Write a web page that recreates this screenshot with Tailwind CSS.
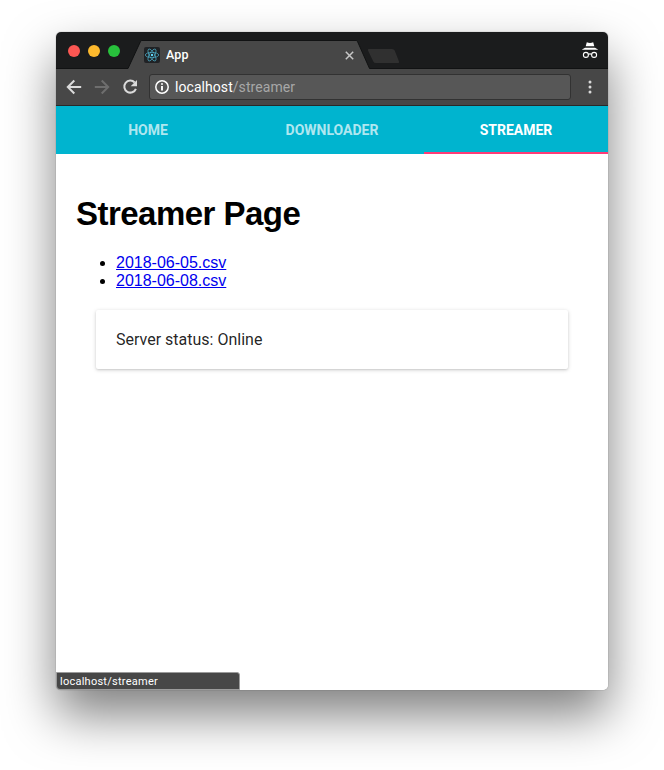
<!DOCTYPE html>
<html lang="en">
<head>
<meta charset="utf-8">
<title>App</title>
<script src="https://cdn.jsdelivr.net/npm/@tailwindcss/browser@4"></script>
</head>
<body class="h-[770px] overflow-hidden bg-white px-14 pt-8">
<div class="relative flex h-[658px] w-[552px] flex-col rounded-[5px] shadow-[0_25px_50px_rgba(0,0,0,0.5),0_0_1px_rgba(0,0,0,0.6)]">
  <div class="flex h-full flex-col overflow-hidden rounded-[5px] bg-white">
    <header class="relative h-[37px] shrink-0 bg-[#1b1c1d]">
      <svg class="absolute inset-0" width="552" height="37" viewBox="0 0 552 37">
        <path d="M0 36.5H72L84.500 9.500Q85 8.500 86 8.500H300Q301 8.500 301.500 9.500L313.500 36.500H552V37H0Z" fill="#474747"/>
        <path d="M0 36.500H72L84.500 9.500Q85 8.500 86 8.500H300Q301 8.500 301.500 9.500L313.500 36.500H552" fill="none" stroke="#111213"/>
        <path d="M312.500 17H336Q338 17 338.700 18.500L343 29.500Q343.500 31 342 31H320Q318 31 317.300 29.500L312 18.500Q311.500 17 312.500 17Z" fill="#303030"/>
      </svg>
      <div class="relative flex h-full items-center">
        <div class="flex gap-2 pl-3">
          <span class="size-3 rounded-full bg-[#fc5753]"></span>
          <span class="size-3 rounded-full bg-[#fdb92d]"></span>
          <span class="size-3 rounded-full bg-[#28c13c]"></span>
        </div>
        <div class="ml-6 flex h-full w-[210px] items-center pt-[9px]">
          <svg class="size-4 rounded-[2px] bg-[#202225]" viewBox="0 0 16 16" fill="none" stroke="#4fb0cc" stroke-width=".7">
            <ellipse cx="8" cy="8" rx="6.700" ry="2.600"/>
            <ellipse cx="8" cy="8" rx="6.700" ry="2.600" transform="rotate(60 8 8)"/>
            <ellipse cx="8" cy="8" rx="6.700" ry="2.600" transform="rotate(120 8 8)"/>
            <circle cx="8" cy="8" r="1.200" fill="#61dafb" stroke="none"/>
          </svg>
          <span class="ml-1.5 font-['Roboto',sans-serif] text-[12.500px] leading-4 font-medium tracking-[0.150px] text-white">App</span>
          <svg class="ml-auto size-[9px]" viewBox="0 0 9 9" stroke="#c8c8c8" stroke-width="1.500"><path d="M.8 .8L8.200 8.200M8.200 .8L.8 8.200"/></svg>
        </div>
        <svg class="mr-[9px] mb-[2px] ml-auto h-[18px] w-[18px]" viewBox="0 0 18 18" fill="#fff">
          <path d="M5.800 1.200Q7.500 1.900 9 1.900Q10.500 1.900 12.200 1.200L13.300 5.200H4.700ZM4 6.800H14L17.300 8.800H.7Z"/>
          <g fill="none" stroke="#fff" stroke-width="1.100"><circle cx="4.900" cy="13.900" r="2.500"/><circle cx="13.100" cy="13.900" r="2.500"/><path d="M7.400 13.400Q9 12.400 10.600 13.400"/></g>
        </svg>
      </div>
    </header>
    <div class="flex h-[37px] shrink-0 items-center border-b border-[#292929] bg-[#474747] pl-[10px]">
      <svg class="size-4" viewBox="0 0 16 16" fill="none" stroke="#dadada" stroke-width="2"><path d="M15.200 8H2M8.300 1.500L1.800 8L8.300 14.500"/></svg>
      <svg class="ml-3 size-4" viewBox="0 0 16 16" fill="none" stroke="#6e6e6e" stroke-width="2"><path d="M.8 8H14M7.700 1.500L14.200 8L7.700 14.500"/></svg>
      <svg class="ml-3 size-4" viewBox="0 0 16 16" fill="none" stroke="#dadada" stroke-width="2"><path d="M12.700 3.500A6 6 0 1 0 13.900 9.800"/><path d="M15 1V7.300H8.700Z" fill="#dadada" stroke="none"/></svg>
      <div class="ml-[11px] flex h-[26px] w-[422px] items-center rounded-[3px] border border-[#323232] bg-[#575757] pl-[5px]">
        <svg class="size-[14px]" viewBox="0 0 14 14" fill="none" stroke="#fff" stroke-width="1.500"><circle cx="7" cy="7" r="6.200"/><path d="M7 6V10.500M7 3.200V4.800" stroke-width="1.900"/></svg>
        <span class="ml-[6px] font-['Roboto',sans-serif] text-[14px] leading-4 tracking-[0.06px] text-white">localhost<span class="text-[#a7a7a7]">/streamer</span></span>
      </div>
      <svg class="ml-[17px] h-[14px] w-1" viewBox="0 0 4 14" fill="#dadada"><circle cx="2" cy="2" r="1.500"/><circle cx="2" cy="7" r="1.500"/><circle cx="2" cy="12" r="1.500"/></svg>
    </div>
    <nav class="grid h-12 shrink-0 grid-cols-3 bg-[#00b4cf] text-center font-['Roboto',sans-serif] text-[14px] leading-[48px] font-bold text-white/70">
      <a>HOME</a>
      <a>DOWNLOADER</a>
      <a class="h-12 border-b-2 border-[#ff3b76] text-white">STREAMER</a>
    </nav>
    <main class="flex-1 px-5 pt-[41px] font-['Liberation_Sans',Arial,sans-serif] text-black">
      <h1 class="text-[33px] leading-[38px] font-bold tracking-[-0.530px]">Streamer Page</h1>
      <ul class="mt-[21px] list-disc pl-10 text-[16px] leading-[18px]">
        <li><a class="text-[#0000ee] underline">2018-06-05.csv</a></li>
        <li><a class="text-[#0000ee] underline">2018-06-08.csv</a></li>
      </ul>
      <section class="mx-5 mt-[20px] h-[59px] rounded-[2px] bg-white px-5 font-['Roboto',sans-serif] text-[16px] leading-[59px] text-black/87 shadow-[0_1px_4px_rgba(0,0,0,0.16),0_1px_2px_rgba(0,0,0,0.1)]">Server status: Online</section>
    </main>
  </div>
  <div class="absolute bottom-0 left-0 flex h-[18px] w-[184px] items-center rounded-tr-[3px] rounded-bl-[4px] border border-[#9b9b9b] bg-[#474747] pt-[2px] pl-[3px] font-['Roboto',sans-serif] text-[11px] leading-4 tracking-[0.250px] text-white">localhost/streamer</div>
</div>
</body>
</html>
